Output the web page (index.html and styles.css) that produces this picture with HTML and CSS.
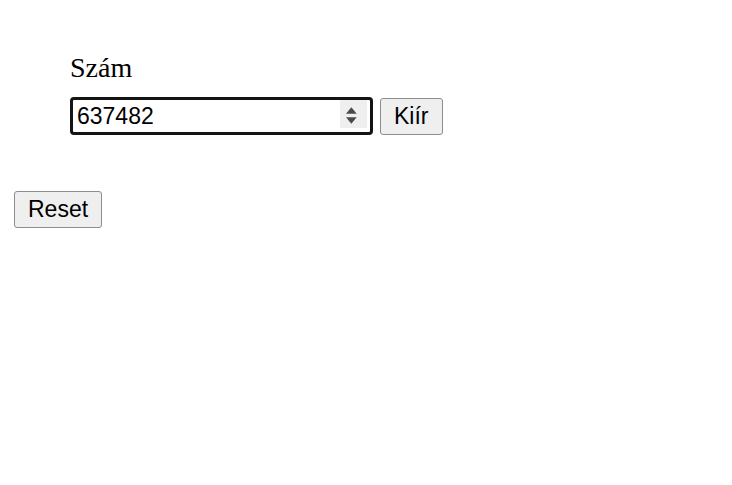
FILE: index.html
```html
<!DOCTYPE html>
<html lang="hu">
<head>
<meta charset="utf-8">
<title>Szám</title>
<link rel="stylesheet" href="styles.css">
</head>
<body>
<div class="form">
  <label class="label" for="num">Szám</label>
  <div class="row">
    <div class="field">
      <input id="num" class="input" type="text" value="637482">
      <span class="spin">
        <svg width="27" height="28" viewBox="0 0 27 28">
          <rect width="27" height="28" fill="#efefef"/>
          <polygon points="6,13.7 16.7,13.7 11.35,7.3" fill="#4a4a4a"/>
          <polygon points="6,17.2 16.7,17.2 11.35,23.8" fill="#4a4a4a"/>
        </svg>
      </span>
    </div>
    <button class="btn" type="button">Kiír</button>
  </div>
</div>
<div class="reset">
  <button class="btn" type="button">Reset</button>
</div>
</body>
</html>
```
FILE: styles.css
```css
html, body {
  margin: 0;
  padding: 0;
  background: #ffffff;
}
.form {
  padding: 52px 0 0 70px;
  display: flex;
  flex-direction: column;
}
.label {
  font-family: "Liberation Serif", serif;
  font-size: 28px;
  line-height: 32px;
  color: #000;
  margin-bottom: 13px;
}
.row {
  display: flex;
  align-items: center;
  gap: 7px;
}
.field {
  box-sizing: border-box;
  width: 303px;
  height: 38px;
  border: 3px solid #141414;
  border-radius: 4px;
  display: flex;
  align-items: center;
  padding: 0 3px 0 4px;
  background: #fff;
}
.input {
  flex: 1;
  min-width: 0;
  border: 0;
  outline: none;
  padding: 0;
  margin: 0;
  font-family: "Liberation Sans", Arial, sans-serif;
  font-size: 23px;
  color: #000;
  background: transparent;
  height: 32px;
}
.spin {
  display: flex;
  align-self: flex-start;
  width: 27px;
  height: 28px;
}
.btn {
  box-sizing: border-box;
  height: 37px;
  padding: 0 13px;
  margin: 0;
  font-family: "Liberation Sans", Arial, sans-serif;
  font-size: 23px;
  color: #000;
  background: #efefef;
  border: 1px solid #8d8d8d;
  border-radius: 3px;
}
.reset {
  padding: 56px 0 0 14px;
}
```
